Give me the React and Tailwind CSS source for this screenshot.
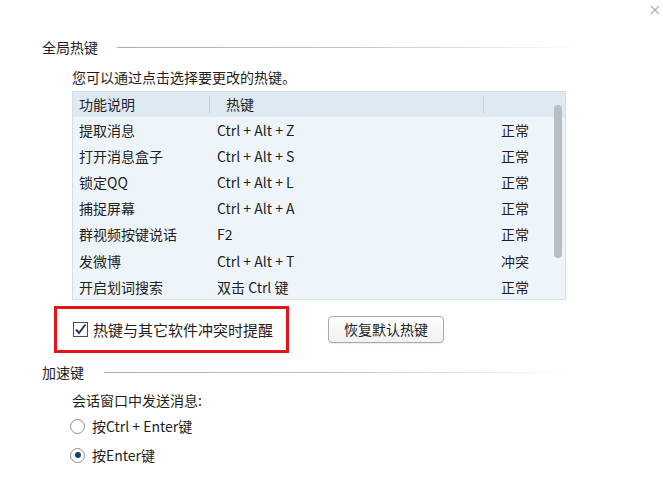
const rows = [
  ['提取消息', 'Ctrl + Alt + Z', '正常'],
  ['打开消息盒子', 'Ctrl + Alt + S', '正常'],
  ['锁定QQ', 'Ctrl + Alt + L', '正常'],
  ['捕捉屏幕', 'Ctrl + Alt + A', '正常'],
  ['群视频按键说话', 'F2', '正常'],
  ['发微博', 'Ctrl + Alt + T', '冲突'],
  ['开启划词搜索', '双击 Ctrl 键', '正常'],
]

function SectionTitle({ label, gap }) {
  return (
    <div className="flex items-center h-[20px]">
      <span className="text-[14px] leading-[20px] text-[#1e1e1e]">{label}</span>
      <div className={`${gap} h-px w-[470px] bg-gradient-to-r from-[#9eb0c2] via-[#b9c7d4] to-white`} />
    </div>
  )
}

function Radio({ checked, label }) {
  return (
    <div className="flex items-center h-[20px] gap-[7px]">
      <span className="w-[15px] h-[15px] rounded-full border border-[#8d8d8d] bg-white flex items-center justify-center">
        {checked && <span className="w-[6px] h-[6px] rounded-full bg-[#1f3c6e]" />}
      </span>
      <span className="text-[14px] leading-[20px] text-[#1e1e1e]">{label}</span>
    </div>
  )
}

export default function App() {
  return (
    <div className="relative w-[663px] h-[481px] bg-white overflow-hidden" style={{ fontFamily: '"Noto Sans CJK SC", "Noto Sans", sans-serif' }}>
      {/* close */}
      <svg className="absolute top-[5px] right-[3px]" width="10" height="10" viewBox="0 0 10 10">
        <path d="M1 1 L9 9 M9 1 L1 9" stroke="#b0b0b0" strokeWidth="1.2" />
      </svg>

      <div className="pl-[42px] pt-[37px]">
        <SectionTitle label="全局热键" gap="ml-[19px]" />

        <div className="pl-[30px]">
          <div className="mt-[10px] text-[14px] leading-[20px] text-[#1e1e1e]">您可以通过点击选择要更改的热键。</div>

          {/* table */}
          <div className="mt-[4px] w-[494px] h-[209px] border border-[#d4dee7] bg-[#eef5fa] relative">
            <div className="grid grid-cols-[136px_274px_1fr] h-[25px] bg-[#dde9f3] text-[14px] leading-[25px] text-[#1e1e1e]">
              <div className="pl-[6px]">功能说明</div>
              <div className="pl-[16px] border-l border-[#c5d0da] my-[4px] leading-[17px]">热键</div>
              <div className="border-l border-[#c5d0da] my-[4px]" />
            </div>
            {rows.map((r) => (
              <div key={r[0]} className="grid grid-cols-[136px_274px_1fr] h-[26.2px] items-center text-[14px] text-[#1e1e1e]">
                <div className="pl-[6px]">{r[0]}</div>
                <div className="pl-[8px]">{r[1]}</div>
                <div className="pl-[18px]">{r[2]}</div>
              </div>
            ))}
            {/* scrollbar thumb */}
            <div className="absolute right-[3px] top-[13px] w-[8px] h-[153px] rounded-full bg-[#b7bec5]" />
          </div>
        </div>

        {/* checkbox + button */}
        <div className="flex items-center mt-[6px] ml-[12px]">
          <div className="w-[235px] h-[47px] border-[3px] border-[#e4141b] flex items-center pl-[16px] gap-[5px]">
            <span className="w-[15px] h-[15px] border border-[#4a4a4a] bg-white flex items-center justify-center">
              <svg width="13" height="13" viewBox="0 0 13 13">
                <path d="M2 6.5 L5 10 L11.5 1.5" fill="none" stroke="#1c3b6c" strokeWidth="2" />
              </svg>
            </span>
            <span className="text-[15px] leading-[20px] text-[#1e1e1e]">热键与其它软件冲突时提醒</span>
          </div>
          <button className="ml-[39px] w-[116px] h-[27px] rounded-[4px] border border-[#a9a9a9] bg-gradient-to-b from-white to-[#f1f1f1] text-[14px] leading-[25px] text-[#1e1e1e] shadow-[0_1px_1px_rgba(0,0,0,0.08)]">
            恢复默认热键
          </button>
        </div>

        <div className="mt-[9px]">
          <SectionTitle label="加速键" gap="ml-[20px]" />
        </div>

        <div className="pl-[28px]">
          <div className="mt-[8px] text-[14px] leading-[20px] text-[#1e1e1e] pl-[2px]">会话窗口中发送消息:</div>
          <div className="mt-[6px]"><Radio label="按Ctrl + Enter键" /></div>
          <div className="mt-[9px]"><Radio checked label="按Enter键" /></div>
        </div>
      </div>
    </div>
  )
}
